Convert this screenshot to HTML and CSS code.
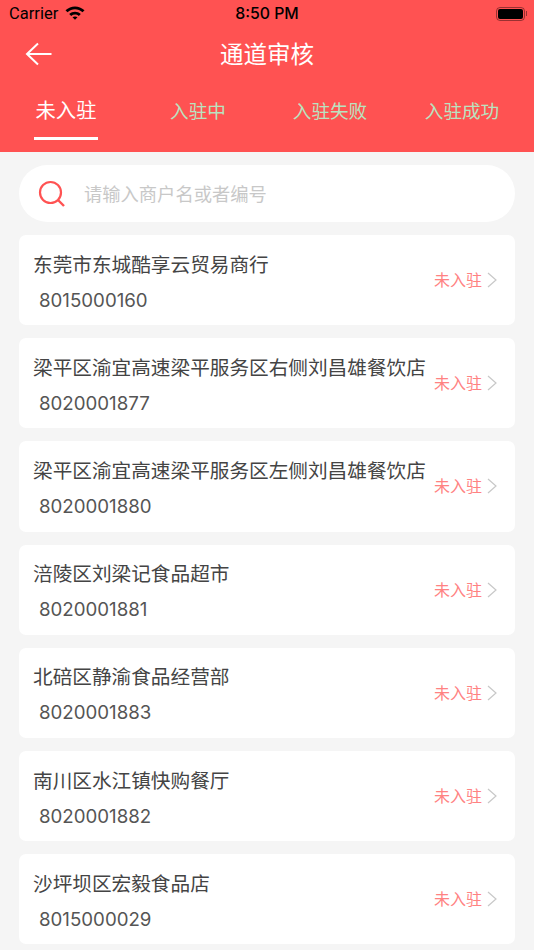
FILE: index.html
```html
<!DOCTYPE html>
<html lang="zh">
<head>
<meta charset="utf-8">
<title>通道审核</title>
<link rel="stylesheet" href="styles.css">
</head>
<body>
<header class="top">
  <div class="status">
    <div class="status-left">
      <span>Carrier</span>
      <svg class="wifi" viewBox="0 0 20 15" width="20" height="15"><path d="M.5 5.200C5.900.1 14.100.1 19.500 5.200l-2 2.100C13.200 3.300 6.800 3.300 2.500 7.300z"/><path d="M4.200 8.900c3.400-3 8.200-3 11.600 0l-2 2.100c-2.300-1.900-5.300-1.900-7.600 0z"/><path d="M7.500 12.200c1.500-1.100 3.500-1.100 5 0L10 14.800z"/></svg>
    </div>
    <div class="status-time">8:50 PM</div>
    <div class="status-right">
      <span class="battery"><span class="battery-level"></span></span><span class="battery-cap"></span>
    </div>
  </div>
  <div class="nav">
    <svg class="back" viewBox="0 0 28 24" width="28" height="24"><path d="M26.500 12H2M13 1.500 2 12l11 10.500" fill="none" stroke="#fff" stroke-width="2"/></svg>
    <h1>通道审核</h1>
  </div>
  <nav class="tabs">
    <a class="tab active">未入驻</a>
    <a class="tab">入驻中</a>
    <a class="tab">入驻失败</a>
    <a class="tab">入驻成功</a>
  </nav>
</header>
<main class="content">
  <div class="search">
    <svg class="search-icon" viewBox="0 0 28 28" width="28" height="28"><circle cx="12.500" cy="12.500" r="10.500" fill="none" stroke="#ff5252" stroke-width="2.200"/><path d="M20 20l6 6" stroke="#ff5252" stroke-width="2.400" fill="none"/></svg>
    <span class="placeholder">请输入商户名或者编号</span>
  </div>
  <ul class="list">
    <li class="card"><div class="info"><div class="name">东莞市东城酷享云贸易商行</div><div class="code">8015000160</div></div><div class="state"><span class="state-text">未入驻</span><svg class="chev" viewBox="0 0 10 16" width="10" height="16"><path d="M1 1l8 7-8 7" fill="none" stroke="#c8c8c8" stroke-width="1.200"/></svg></div></li>
    <li class="card"><div class="info"><div class="name">梁平区渝宜高速梁平服务区右侧刘昌雄餐饮店</div><div class="code">8020001877</div></div><div class="state"><span class="state-text">未入驻</span><svg class="chev" viewBox="0 0 10 16" width="10" height="16"><path d="M1 1l8 7-8 7" fill="none" stroke="#c8c8c8" stroke-width="1.200"/></svg></div></li>
    <li class="card"><div class="info"><div class="name">梁平区渝宜高速梁平服务区左侧刘昌雄餐饮店</div><div class="code">8020001880</div></div><div class="state"><span class="state-text">未入驻</span><svg class="chev" viewBox="0 0 10 16" width="10" height="16"><path d="M1 1l8 7-8 7" fill="none" stroke="#c8c8c8" stroke-width="1.200"/></svg></div></li>
    <li class="card"><div class="info"><div class="name">涪陵区刘梁记食品超市</div><div class="code">8020001881</div></div><div class="state"><span class="state-text">未入驻</span><svg class="chev" viewBox="0 0 10 16" width="10" height="16"><path d="M1 1l8 7-8 7" fill="none" stroke="#c8c8c8" stroke-width="1.200"/></svg></div></li>
    <li class="card"><div class="info"><div class="name">北碚区静渝食品经营部</div><div class="code">8020001883</div></div><div class="state"><span class="state-text">未入驻</span><svg class="chev" viewBox="0 0 10 16" width="10" height="16"><path d="M1 1l8 7-8 7" fill="none" stroke="#c8c8c8" stroke-width="1.200"/></svg></div></li>
    <li class="card"><div class="info"><div class="name">南川区水江镇快购餐厅</div><div class="code">8020001882</div></div><div class="state"><span class="state-text">未入驻</span><svg class="chev" viewBox="0 0 10 16" width="10" height="16"><path d="M1 1l8 7-8 7" fill="none" stroke="#c8c8c8" stroke-width="1.200"/></svg></div></li>
    <li class="card"><div class="info"><div class="name">沙坪坝区宏毅食品店</div><div class="code">8015000029</div></div><div class="state"><span class="state-text">未入驻</span><svg class="chev" viewBox="0 0 10 16" width="10" height="16"><path d="M1 1l8 7-8 7" fill="none" stroke="#c8c8c8" stroke-width="1.200"/></svg></div></li>
  </ul>
</main>
</body>
</html>
```
FILE: styles.css
```css
* { box-sizing: border-box; }
html, body { margin: 0; padding: 0; }
body {
  width: 534px;
  height: 950px;
  overflow: hidden;
  background: #f5f5f5;
  font-family: "Noto Sans CJK SC", "Liberation Sans", sans-serif;
}
.top { background: #ff5252; height: 152.400px; }
.status {
  height: 27px;
  display: grid;
  grid-template-columns: 1fr auto 1fr;
  align-items: center;
  padding: 0 7px 0 9px;
  color: #000;
  font-family: Inter, "Liberation Sans", sans-serif;
  font-size: 15.800px;
}
.status-left { display: flex; align-items: center; gap: 7px; font-family: Roboto, sans-serif; font-size: 16.500px; }
.status-left .wifi { margin-bottom: 2px; }
.status-time { font-weight: 500; margin-left: -2px; }
.status-right { display: flex; justify-content: flex-end; align-items: center; }
.battery {
  width: 29px; height: 14px;
  border: 1px solid rgba(0,0,0,.4);
  border-radius: 4px;
  padding: 1px;
  display: flex;
}
.battery-level { flex: 1; background: #000; border-radius: 2px; }
.battery-cap { width: 1px; height: 5px; background: rgba(0,0,0,.4); margin-left: 1px; }
.nav { height: 54px; position: relative; display: flex; align-items: center; justify-content: center; }
.back { position: absolute; left: 25px; top: 15px; }
h1 { margin: 0 0 2px; color: #fff; font-size: 23.500px; font-weight: 400; line-height: 52px; }
.tabs { display: grid; grid-template-columns: repeat(4, 132px); height: 71px; }
.tab {
  justify-self: center;
  height: 59px;
  padding-top: 15px;
  font-size: 18.600px;
  line-height: 27px;
  color: #b9e3c0;
}
.tab.active { color: #fff; font-size: 20.300px; border-bottom: 3px solid #fff; padding: 15px 2px 0; }
.content { padding: 12.800px 19px 0; }
.search {
  height: 56.800px;
  background: #fff;
  border-radius: 28.400px;
  display: flex;
  align-items: center;
  padding-left: 19px;
  gap: 18px;
}
.search-icon { flex: none; }
.placeholder { font-size: 18.300px; line-height: 24px; color: #c8c8c8; margin-bottom: 2px; }
.list { list-style: none; margin: 13px 0 0; padding: 0; display: flex; flex-direction: column; gap: 13px; }
.card {
  height: 90.200px;
  background: #fff;
  border-radius: 7px;
  display: flex;
  align-items: center;
  justify-content: space-between;
  padding: 0 18px 0 14px;
}
.info { display: flex; flex-direction: column; gap: 11px; padding-top: 4px; }
.name { font-size: 19.650px; line-height: 26px; color: #444; white-space: nowrap; }
.code { font-family: Inter, "Liberation Sans", sans-serif; font-size: 18.700px; line-height: 26px; color: #555; padding-left: 6px; }
.state { display: flex; align-items: center; gap: 5px; font-size: 16px; color: #ff8282; }
.state-text { margin-bottom: 2px; }
```
